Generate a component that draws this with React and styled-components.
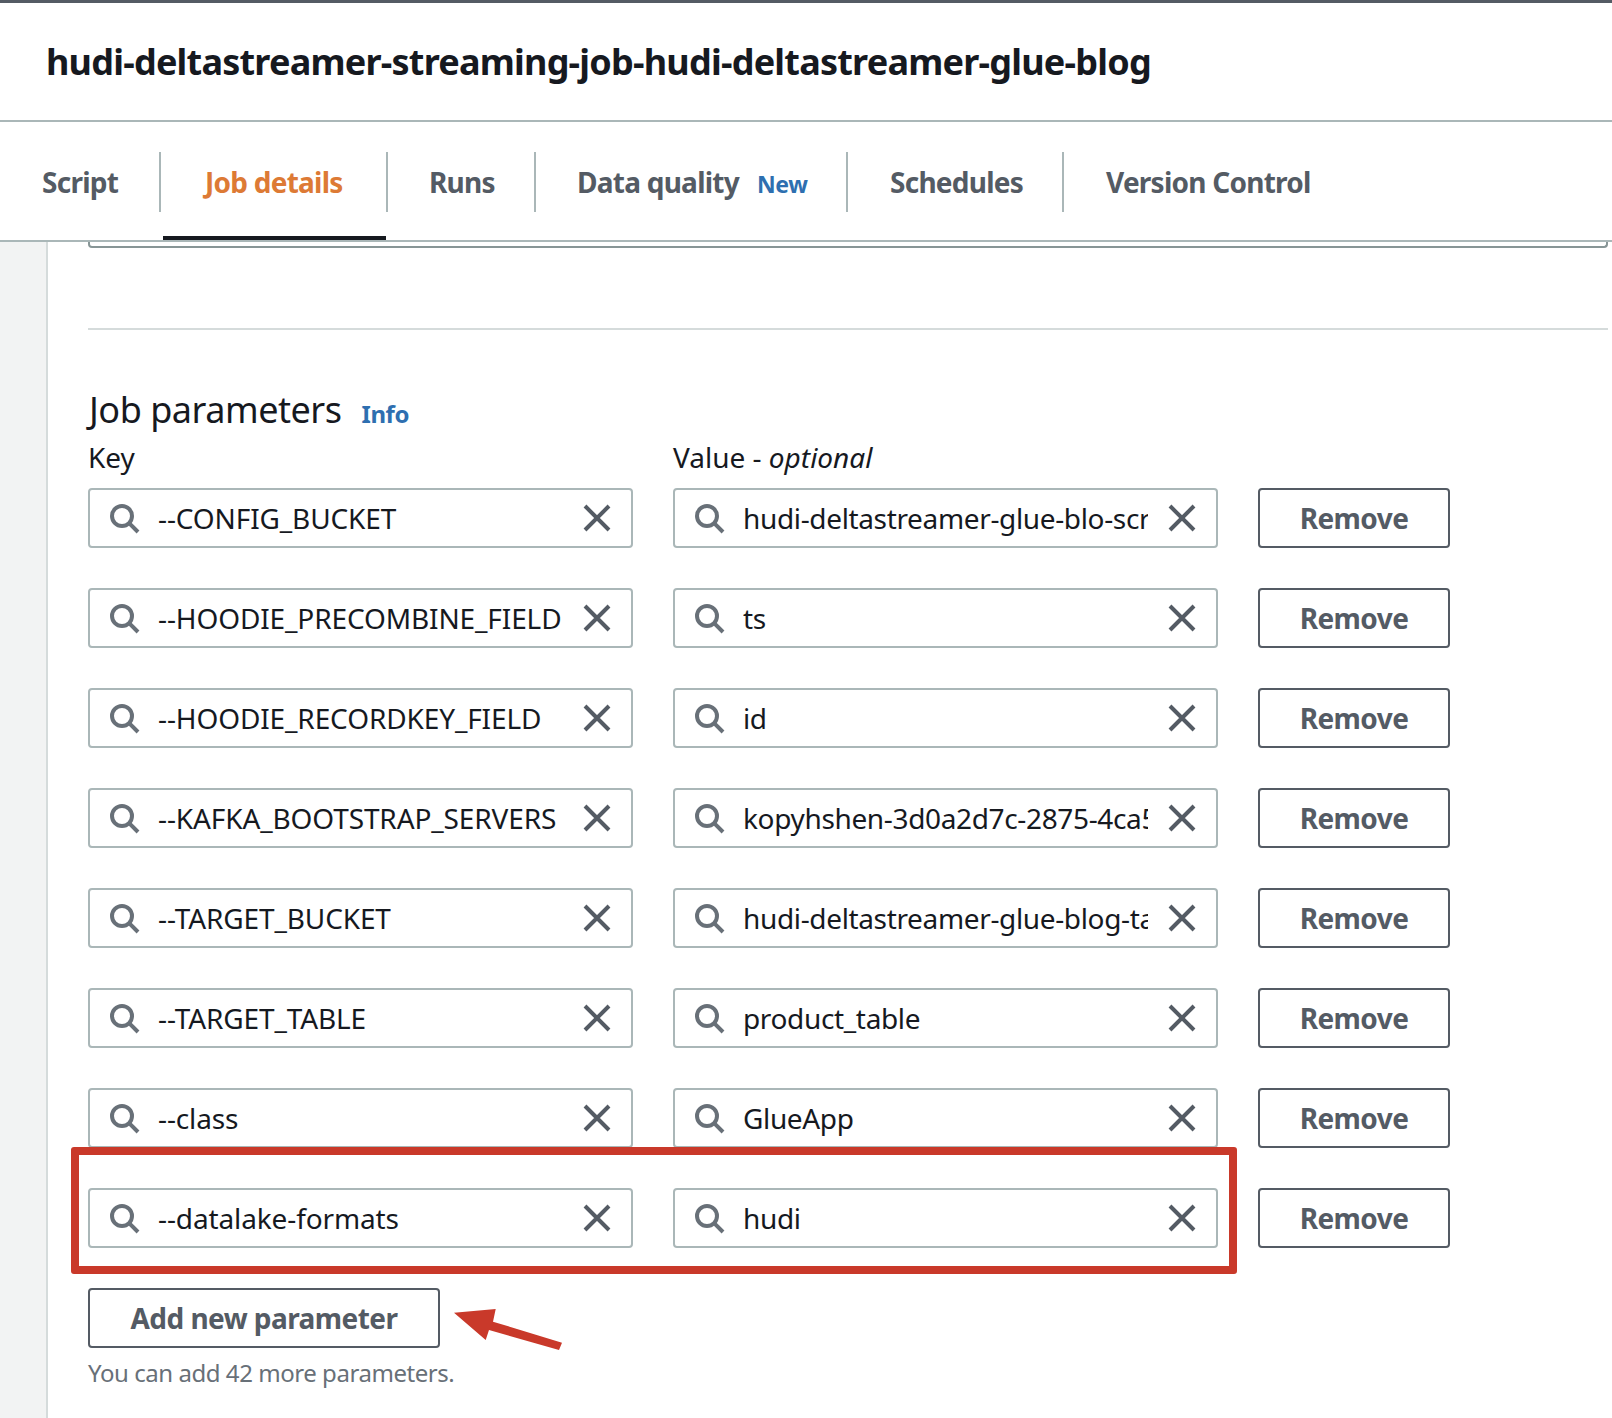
import React from "react";
import styled, { createGlobalStyle } from "styled-components";

const Global = createGlobalStyle`
  html, body { margin: 0; padding: 0; background: #fff; }
  body { font-family: "Noto Sans", "Open Sans", sans-serif; color: #16191f; }
  * { box-sizing: border-box; }
`;

const Page = styled.div`
  position: relative;
  width: 1612px;
  height: 1418px;
  overflow: hidden;
  background: #fff;
  border-top: 3px solid #545b64;
`;

const Header = styled.header`
  height: 119px;
  padding: 0 0 0 46px;
  display: flex;
  align-items: center;
  border-bottom: 2px solid #aab7b8;
`;

const Title = styled.h1`
  margin: 0;
  font-size: 36px;
  line-height: 44px;
  font-weight: 700;
  letter-spacing: -0.78px;
  white-space: nowrap;
  color: #16191f;
`;

const TabBar = styled.nav`
  height: 120px;
  display: flex;
  padding-top: 30px;
  border-bottom: 2px solid #aab7b8;
`;

const Tab = styled.div`
  position: relative;
  height: 60px;
  width: ${(p) => p.$w}px;
  padding-left: ${(p) => p.$pad}px;
  display: flex;
  align-items: center;
  gap: 18px;
  font-size: 28px;
  font-weight: 700;
  letter-spacing: -0.75px;
  white-space: nowrap;
  color: ${(p) => (p.$active ? "#dd7a35" : "#545b64")};
  border-right: ${(p) => (p.$last ? "none" : "2px solid #aab7b8")};
  &::after {
    content: "";
    display: ${(p) => (p.$active ? "block" : "none")};
    position: absolute;
    left: 2px;
    right: 0;
    bottom: -28px;
    height: 4px;
    background: #16191f;
  }
`;

const NewTag = styled.span`
  font-size: 23px;
  font-weight: 700;
  letter-spacing: -0.4px;
  color: #2e6fb0;
  padding-top: 3px;
`;

const Body = styled.div`
  display: flex;
  height: 1176px;
`;

const Gutter = styled.aside`
  width: 48px;
  flex: none;
  background: #f2f3f3;
  border-right: 2px solid #d5dbdb;
`;

const Main = styled.main`
  flex: 1;
  min-width: 0;
  padding: 0 4px 0 40px;
`;

const ClippedCard = styled.div`
  height: 6px;
  border: 2px solid #879596;
  border-top: none;
  border-radius: 0 0 4px 4px;
`;

const Divider = styled.hr`
  margin: 80px 0 0;
  border: none;
  height: 2px;
  background: #d5dbdb;
`;

const SectionTitle = styled.div`
  display: flex;
  align-items: baseline;
  gap: 20px;
  margin-top: 55px;
  height: 50px;
`;

const H2 = styled.h2`
  margin: 0 0 0 1px;
  font-size: 36px;
  line-height: 50px;
  font-weight: 400;
  letter-spacing: -0.48px;
  color: #16191f;
`;

const InfoLink = styled.span`
  font-size: 24px;
  font-weight: 700;
  letter-spacing: -0.4px;
  color: #2e6fb0;
`;

const Grid = styled.div`
  display: grid;
  grid-template-columns: 545px 545px 192px;
  column-gap: 40px;
  row-gap: 40px;
`;

const Label = styled.div`
  font-size: 28px;
  line-height: 40px;
  height: 40px;
  margin: 2px 0 -29px;
  color: #16191f;
  em { font-style: italic; }
`;

const Field = styled.div`
  height: 60px;
  display: flex;
  align-items: center;
  padding: 0 18px 0 18px;
  border: 2px solid #aab7b8;
  border-radius: 4px;
  background: #fff;
`;

const FieldText = styled.div`
  flex: 1;
  min-width: 0;
  margin: 0 18px 0 18px;
  font-size: 28px;
  line-height: 40px;
  letter-spacing: ${(p) => (p.$value ? "-0.35px" : "-0.12px")};
  white-space: nowrap;
  overflow: hidden;
  color: #16191f;
`;

const Icon = styled.svg`
  width: 32px;
  height: 32px;
  flex: none;
  fill: none;
  stroke: ${(p) => p.$color};
  stroke-width: 2;
`;

const OutlineButton = styled.button`
  height: 60px;
  width: ${(p) => (p.$w ? p.$w + "px" : "auto")};
  padding: 0;
  font-family: inherit;
  font-size: 28px;
  font-weight: 700;
  letter-spacing: -0.55px;
  color: #545b64;
  background: #fff;
  border: 2px solid #545b64;
  border-radius: 4px;
`;

const AddRow = styled.div`
  margin-top: 40px;
`;

const Hint = styled.div`
  margin-top: 7px;
  font-size: 24px;
  line-height: 36px;
  letter-spacing: -0.45px;
  color: #687078;
`;

const Highlight = styled.div`
  position: absolute;
  left: 71px;
  top: 1144px;
  width: 1166px;
  height: 127px;
  border: 8px solid #c9392a;
  border-radius: 3px;
  pointer-events: none;
`;

const Arrow = styled.svg`
  position: absolute;
  left: 450px;
  top: 1297px;
  width: 120px;
  height: 55px;
`;

const SearchIcon = () => (
  <Icon $color="#687078" viewBox="0 0 16 16">
    <circle cx="7" cy="7" r="5" />
    <path d="M10.7 10.7 15 15" />
  </Icon>
);

const ClearIcon = () => (
  <Icon $color="#545b64" viewBox="0 0 16 16">
    <path d="M2 2 14 14M14 2 2 14" />
  </Icon>
);

const params = [
  ["--CONFIG_BUCKET", "hudi-deltastreamer-glue-blo-scripts"],
  ["--HOODIE_PRECOMBINE_FIELD", "ts"],
  ["--HOODIE_RECORDKEY_FIELD", "id"],
  ["--KAFKA_BOOTSTRAP_SERVERS", "kopyhshen-3d0a2d7c-2875-4ca5-a4e1"],
  ["--TARGET_BUCKET", "hudi-deltastreamer-glue-blog-target"],
  ["--TARGET_TABLE", "product_table"],
  ["--class", "GlueApp"],
  ["--datalake-formats", "hudi"],
];

const InputField = ({ text, value }) => (
  <Field>
    <SearchIcon />
    <FieldText $value={value}>{text}</FieldText>
    <ClearIcon />
  </Field>
);

export default function App() {
  return (
    <Page>
      <Global />
      <Header>
        <Title>hudi-deltastreamer-streaming-job-hudi-deltastreamer-glue-blog</Title>
      </Header>
      <TabBar>
        <Tab $w={161} $pad={42}>Script</Tab>
        <Tab $w={227} $pad={44} $active>Job details</Tab>
        <Tab $w={148} $pad={41}>Runs</Tab>
        <Tab $w={312} $pad={41}>Data quality<NewTag>New</NewTag></Tab>
        <Tab $w={216} $pad={42}>Schedules</Tab>
        <Tab $w={300} $pad={42} $last>Version Control</Tab>
      </TabBar>
      <Body>
        <Gutter />
        <Main>
          <ClippedCard />
          <Divider />
          <SectionTitle>
            <H2>Job parameters</H2>
            <InfoLink>Info</InfoLink>
          </SectionTitle>
          <Grid>
            <Label>Key</Label>
            <Label>Value - <em>optional</em></Label>
            <div />
            {params.map(([k, v]) => (
              <React.Fragment key={k}>
                <InputField text={k} />
                <InputField text={v} value />
                <OutlineButton>Remove</OutlineButton>
              </React.Fragment>
            ))}
          </Grid>
          <AddRow>
            <OutlineButton $w={352}>Add new parameter</OutlineButton>
          </AddRow>
          <Hint>You can add 42 more parameters.</Hint>
        </Main>
      </Body>
      <Highlight />
      <Arrow viewBox="0 0 120 55">
        <path
          d="M4 12.7 45.7 9 43 21.7 112 42.7 109 50 39 30 35.7 40Z"
          fill="#c9392a"
        />
      </Arrow>
    </Page>
  );
}
